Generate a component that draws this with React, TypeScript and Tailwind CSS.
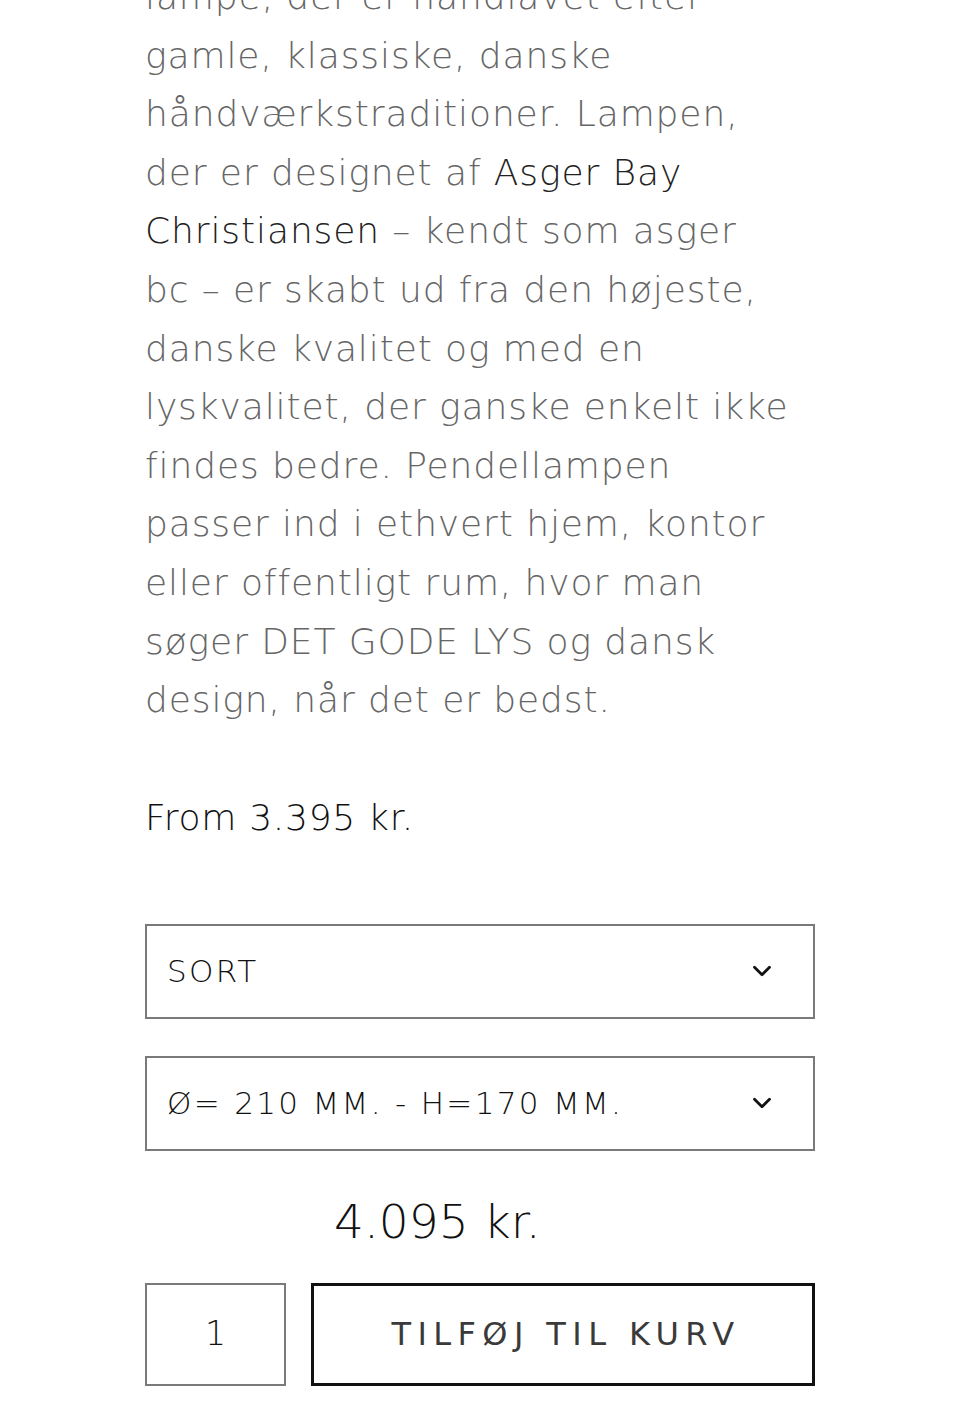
import { ChevronDown } from 'lucide-react'

const font = { fontFamily: '"DejaVu Sans", "Noto Sans", sans-serif' }

function Select({ label }: { label: string }) {
  return (
    <div className="flex h-[95px] items-center justify-between border-2 border-[#7a7a7a] pl-[20px] pr-[36px]">
      <span className="text-[31px] font-light uppercase tracking-[0.075em] text-[#111]">{label}</span>
      <ChevronDown size={30} strokeWidth={2.2} className="text-[#111]" />
    </div>
  )
}

export default function App() {
  const lines = [
    'lampe, der er håndlavet efter',
    'gamle, klassiske, danske',
    'håndværkstraditioner. Lampen,',
  ]
  const rest = [
    'bc – er skabt ud fra den højeste,',
    'danske kvalitet og med en',
    'lyskvalitet, der ganske enkelt ikke',
    'findes bedre. Pendellampen',
    'passer ind i ethvert hjem, kontor',
    'eller offentligt rum, hvor man',
    'søger DET GODE LYS og dansk',
    'design, når det er bedst.',
  ]

  return (
    <div className="h-[1417px] overflow-hidden bg-white" style={font}>
      <div className="mx-auto w-[670px]">
        <p className="-mt-[32px] whitespace-nowrap text-[36px] font-extralight leading-[58.6px] tracking-[0.025em] text-[#666]">
          {lines.map((l) => (
            <span key={l} className="block">{l}</span>
          ))}
          <span className="block">der er designet af <span className="text-[#222]">Asger Bay</span></span>
          <span className="block"><span className="text-[#222]">Christiansen</span> – kendt som asger</span>
          {rest.map((l) => (
            <span key={l} className="block">{l}</span>
          ))}
        </p>

        <div className="mt-[59px] text-[36px] font-extralight leading-[58px] tracking-[0.02em] text-[#111]">From 3.395 kr.</div>

        <div className="mt-[77px] flex flex-col gap-[37px]">
          <Select label="Sort" />
          <Select label="Ø= 210 mm. - H=170 mm." />
        </div>

        <div className="mt-[42px] pl-[189px] text-[47px] font-light leading-[58px] text-[#111]">4.095 kr.</div>

        <div className="mt-[32px] flex gap-[25px]">
          <div className="flex h-[103px] w-[141px] items-center justify-center border-2 border-[#7a7a7a] text-[33px] font-extralight text-[#111]">1</div>
          <button className="flex h-[103px] flex-1 items-center justify-center border-[3px] border-[#111] pl-[6px] text-[32px] font-normal uppercase tracking-[0.2em] text-[#3a3a3a]">
            Tilføj til kurv
          </button>
        </div>
      </div>
    </div>
  )
}
